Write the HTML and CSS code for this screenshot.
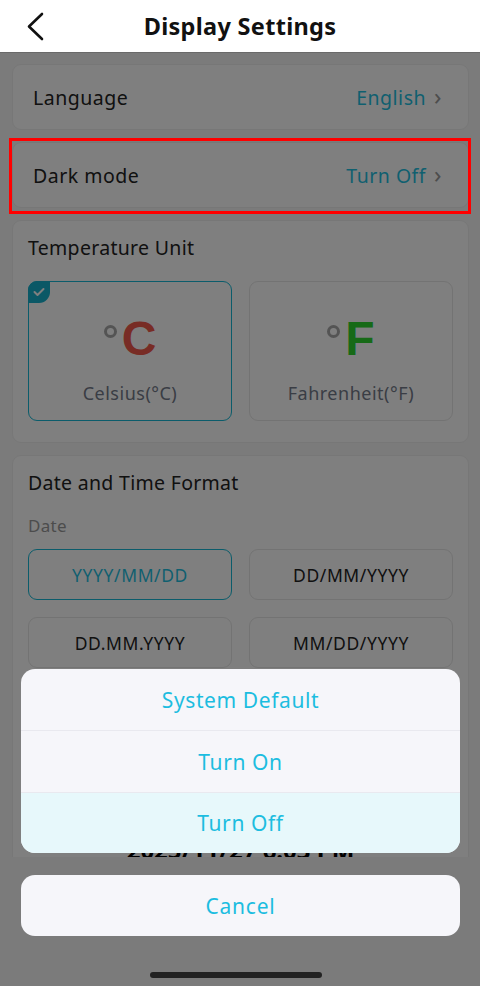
FILE: index.html
```html
<!DOCTYPE html>
<html lang="en">
<head>
    <meta charset="UTF-8">
    <meta name="viewport" content="width=device-width, initial-scale=1.0">
    <title>Display Settings</title>
<link rel="stylesheet" href="styles.css">
</head>
<body>
<div id="wrap">
    <header class="topbar">
        <a href="#" class="back">
            <svg width="20" height="30" viewBox="0 0 20 30"><polyline points="16,2 3,14.5 16,27" fill="none" stroke="#111" stroke-width="2.6" stroke-linecap="round" stroke-linejoin="round"/></svg>
        </a>
        <h1>Display Settings</h1>
    </header>

    <main class="content">
        <div class="card row">
            <span class="row-name">Language</span>
            <span class="row-value">English <i class="chev">&rsaquo;</i></span>
        </div>
        <div class="card row">
            <span class="row-name">Dark mode</span>
            <span class="row-value">Turn Off <i class="chev">&rsaquo;</i></span>
        </div>

        <!-- 온도 단위 -->
        <div class="card block">
            <h3>Temperature Unit</h3>
            <div class="units">
                <div class="unit on">
                    <span class="badge"><svg width="12" height="10" viewBox="0 0 12 10"><polyline points="1.5,5 4.5,8 10.5,2" fill="none" stroke="#fff" stroke-width="2" stroke-linecap="round" stroke-linejoin="round"/></svg></span>
                    <div class="sym"><span class="deg"></span><b class="c">C</b></div>
                    <p>Celsius(°C)</p>
                </div>
                <div class="unit">
                    <div class="sym"><span class="deg"></span><b class="f">F</b></div>
                    <p>Fahrenheit(°F)</p>
                </div>
            </div>
        </div>

        <!-- 날짜 시간 -->
        <div class="card block">
            <h3>Date and Time Format</h3>
            <p class="sub">Date</p>
            <div class="opts">
                <div class="opt on">YYYY/MM/DD</div>
                <div class="opt">DD/MM/YYYY</div>
                <div class="opt">DD.MM.YYYY</div>
                <div class="opt">MM/DD/YYYY</div>
            </div>
            <p class="sub">Time</p>
            <div class="opts">
                <div class="opt">12-hour</div>
                <div class="opt">24-hour</div>
            </div>
            <p class="sub">Preview</p>
            <p class="preview">2025/11/27 6:03 PM</p>
        </div>
    </main>

    <div class="dim"></div>
    <div class="mark"></div>

    <div class="sheet-wrap">
        <ul class="sheet">
            <li>System Default</li>
            <li>Turn On</li>
            <li class="sel">Turn Off</li>
        </ul>
        <div class="cancel">Cancel</div>
        <div class="home-bar"></div>
    </div>
</div>
</body>
</html>
```

FILE: styles.css
```css
* {margin: 0; padding: 0; box-sizing: border-box;}
li {list-style: none;}
a {text-decoration: none; color: inherit;}

body {font-family: "Noto Sans", "Liberation Sans", sans-serif; color: #222;}

#wrap {width: 480px; height: 986px; position: relative; overflow: hidden; background-color: #f6f6f6;}

/* 상단바 */
.topbar {height: 53px; background-color: #fff; border-bottom: 1px solid #6a6a6a; display: flex; align-items: center; justify-content: center; position: relative;}
.topbar .back {position: absolute; left: 26px; top: 12px; display: block; width: 20px; height: 30px;}
.topbar h1 {font-size: 23.5px; font-weight: 700; color: #111; letter-spacing: 0.3px;}

.content {height: 804px; overflow: hidden; padding: 11px 11px 0 12px; display: flex; flex-direction: column; gap: 12px;}

.card {background-color: #fff; border: 1px solid #efefef; border-radius: 9px; flex-shrink: 0;}
.row {height: 66px; display: flex; align-items: center; justify-content: space-between; padding: 0 26px 0 20px; font-size: 19.5px; letter-spacing: 0.5px;}
.row-name {color: #222;}
.row-value {color: #1fc0df; display: flex; align-items: center; gap: 8px;}
.chev {font-style: normal; color: #9a9a9a; font-size: 24px; line-height: 1; margin-top: -3px;}

.block {padding: 14px 15px 21px 15px;}
.block h3 {font-size: 19.5px; font-weight: 400; line-height: 26px; color: #222; letter-spacing: 0.3px;}

/* 온도 */
.units {display: grid; grid-template-columns: 1fr 1fr; gap: 17px; margin-top: 20px;}
.unit {height: 140px; border: 1px solid #e6e6e6; border-radius: 9px; position: relative; display: flex; flex-direction: column; align-items: center; padding-top: 33px;}
.unit.on {border-color: #16b9d6;}
.badge {position: absolute; top: -1px; left: -1px; width: 22px; height: 22px; background-color: #16b0cc; border-radius: 9px 0 11px 0; display: flex; align-items: center; justify-content: center;}
.sym {display: flex; align-items: flex-start; height: 48px; gap: 5px;}
.deg {width: 13px; height: 13px; border: 3px solid #a9a9a9; border-radius: 50%; margin-top: 10px;}
.sym b {font-size: 48px; line-height: 48px; font-weight: 700; font-family: "Liberation Sans", sans-serif;}
.c {color: #f0584a;}
.f {color: #2fd42f;}
.unit p {margin-top: 18px; font-size: 18px; line-height: 24px; color: #747b8a; letter-spacing: 0.5px;}

/* 날짜 */
.sub {font-size: 17px; line-height: 22px; color: #999; margin-top: 19px; letter-spacing: 0.3px;}
.opts {display: grid; grid-template-columns: 1fr 1fr; gap: 17px; margin-top: 12px;}
.opt {height: 51px; border: 1px solid #e6e6e6; border-radius: 9px; display: flex; align-items: center; justify-content: center; font-size: 17.5px; color: #222; letter-spacing: 0.6px;}
.opt.on {border-color: #16b9d6; color: #1fc0df;}
.preview {margin-top: 22px; text-align: center; font-size: 24px; font-weight: 700; line-height: 30px; color: #000;}

.dim {position: absolute; top: 53px; left: 0; right: 0; bottom: 0; background-color: rgba(0,0,0,0.5);}

/* 선택 강조 */
.mark {position: absolute; top: 138px; left: 9px; width: 462px; height: 76px; border: 3px solid #ff0000;}

/* 액션시트 */
.sheet-wrap {position: absolute; left: 21px; right: 20px; top: 669px; display: flex; flex-direction: column;}
.sheet {background-color: #f6f6fa; border-radius: 14px; overflow: hidden;}
.sheet li {height: 62px; display: flex; align-items: center; justify-content: center; font-size: 21px; letter-spacing: 0.6px; color: #1cbde0; border-bottom: 1px solid #e9e9ef;}
.sheet li.sel {background-color: #e7f8fb; border-bottom: 0; height: 60px;}
.cancel {margin-top: 22px; height: 61px; background-color: #f6f6fa; border-radius: 14px; display: flex; align-items: center; justify-content: center; font-size: 21px; letter-spacing: 0.8px; color: #1cbde0;}
.home-bar {width: 172px; height: 6px; background-color: #222; border-radius: 3px; margin: 36px auto 0; position: relative; left: -5px;}
```
